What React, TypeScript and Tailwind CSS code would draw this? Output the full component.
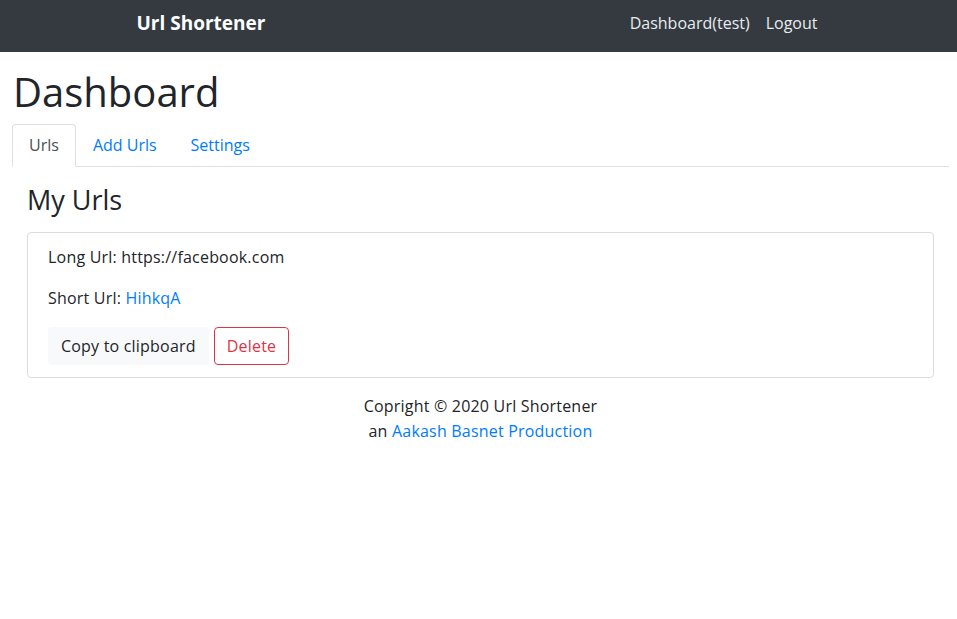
import React, { useState } from 'react';

const tabs = ['Urls', 'Add Urls', 'Settings'];

const App: React.FC = () => {
  const [active, setActive] = useState('Urls');

  return (
    <div className="min-h-screen bg-white text-[#212529] text-base" style={{ fontFamily: '"Open Sans", "Liberation Sans", sans-serif' }}>
      <nav className="bg-[#343a40] h-[52px]">
        <div className="w-[720px] mx-auto px-[15px] h-full flex items-center justify-between pb-[6px]">
          <a className="text-white font-bold text-[19px] ml-[3px]">Url Shortener</a>
          <div className="flex items-center text-[16px] text-[#e9ecef] mr-[-2px]">
            <a className="px-2">Dashboard(test)</a>
            <a className="px-2">Logout</a>
          </div>
        </div>
      </nav>

      <main className="pl-3 pr-2">
        <h1 className="text-[40px] leading-[48px] mt-[16px] mb-2 pl-[1px]">Dashboard</h1>

        <ul className="flex border-b border-[#dee2e6] text-[16px]">
          {tabs.map(t => (
            <li key={t} className="-mb-px">
              <button
                onClick={() => setActive(t)}
                className={
                  t === active
                    ? 'px-4 py-[8px] leading-[25px] border border-[#dee2e6] border-b-white rounded-t bg-white text-[#495057]'
                    : 'px-4 py-[8px] leading-[25px] border border-transparent text-[#007bff]'
                }
              >
                {t}
              </button>
            </li>
          ))}
        </ul>

        <div className="px-[15px]">
          <h3 className="text-[27px] leading-[34px] mt-[16px] mb-[15px]">My Urls</h3>

          <div className="border border-[#dcdcdc] rounded px-5 py-3 text-[16px] tracking-[0.2px]">
            <p className="leading-6 mb-[17px]">Long Url: https://facebook.com</p>
            <p className="leading-6 mb-[17px]">
              Short Url: <a className="text-[#007bff]">HihkqA</a>
            </p>
            <div className="flex gap-[5px]">
              <button className="bg-[#f8f9fa] rounded px-[13px] h-[38px] leading-6">Copy to clipboard</button>
              <button className="border border-[#dc3545] text-[#dc3545] rounded px-[12px] h-[38px] leading-6">Delete</button>
            </div>
          </div>

          <footer className="text-center mt-[16px] text-[16px] leading-[25px] tracking-[0.2px]">
            <p>Copright © 2020 Url Shortener</p>
            <p>
              an <a className="text-[#007bff]">Aakash Basnet Production</a>
            </p>
          </footer>
        </div>
      </main>
    </div>
  );
};

export default App;
